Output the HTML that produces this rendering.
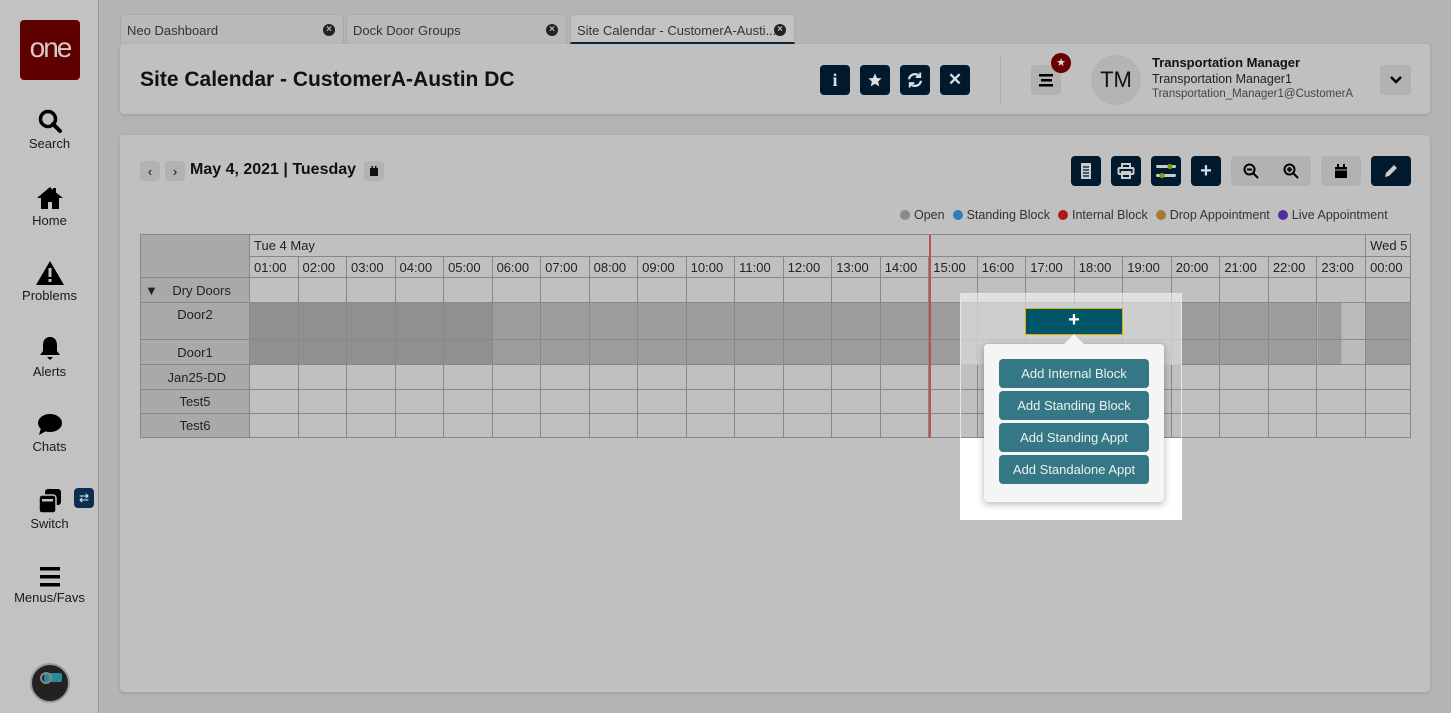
<!DOCTYPE html>
<html><head><meta charset="utf-8">
<style>
*{box-sizing:border-box;margin:0;padding:0}
body{width:1451px;height:713px;overflow:hidden;background:#b4b4b4;font-family:"Liberation Sans","Open Sans",sans-serif;color:#111;position:relative}
.abs{position:absolute}
#side{left:0;top:0;width:99px;height:713px;background:#c2c2c2;border-right:1px solid #9a9a9a}
.nav{position:absolute;left:0;width:99px;text-align:center;font-size:13px;color:#1a1a1a}
.nav svg{display:block;margin:0 auto 2px}
.tab{position:absolute;top:14px;height:30px;background:#b9b9b9;border-radius:5px 5px 0 0;font-size:13px;color:#333;padding:8px 6px;border:1px solid #aaa;border-bottom:none}
.tab .x{position:absolute;right:8px;top:9px;width:12px;height:12px;border-radius:50%;background:#222;color:#bbb;font-size:10px;line-height:12px;text-align:center;font-weight:bold}
.card{background:#c0c0c0;border-radius:4px;box-shadow:0 1px 3px rgba(0,0,0,.15)}
.db{position:absolute;width:30px;height:30px;background:#021a2d;border-radius:4px;display:flex;align-items:center;justify-content:center}
.lb{position:absolute;background:#b2b2b2;border-radius:4px;display:flex;align-items:center;justify-content:center}
table{position:absolute;left:140px;top:234px;border-collapse:collapse;table-layout:fixed;width:1271px;font-size:13px;color:#222}
td{border:1px solid #888;padding:0 4px;white-space:nowrap;overflow:hidden}
td.l{background:#a9a9a9;text-align:center}
.d1{background:#909090}.d2{background:#9c9c9c}
.mb{position:absolute;left:999px;width:150px;height:29px;background:#347785;border-radius:4px;color:#f0f0f0;font-size:13px;text-align:center;line-height:29px}
.leg{font-size:12.5px;color:#333}
.leg i{display:inline-block;width:10px;height:10px;border-radius:50%;margin:0 4px 0 8px;vertical-align:-1px}
</style></head><body>

<div id="side" class="abs">
  <div class="abs" style="left:20px;top:20px;width:60px;height:60px;background:#5e0000;border-radius:4px;color:#d8c8c8;font-size:28px;text-align:center;line-height:56px;letter-spacing:-2px">one</div>
  <div class="nav" style="top:108px"><svg width="26" height="26" viewBox="0 0 26 26"><circle cx="11" cy="11" r="7.5" fill="none" stroke="#000" stroke-width="3.5"/><path d="M16 16l7 7" stroke="#000" stroke-width="4" stroke-linecap="round"/></svg>Search</div>
  <div class="nav" style="top:185px"><svg width="28" height="26" viewBox="0 0 28 26"><path d="M14 2L1 13h4v11h7v-7h4v7h7V13h4L20 7.5V3h-3v2z" fill="#000"/></svg>Home</div>
  <div class="nav" style="top:260px"><svg width="30" height="26" viewBox="0 0 30 26"><path d="M15 1L1 25h28z" fill="#000"/><rect x="13.5" y="8" width="3" height="9" fill="#c2c2c2"/><rect x="13.5" y="19" width="3" height="3" fill="#c2c2c2"/></svg>Problems</div>
  <div class="nav" style="top:336px"><svg width="24" height="26" viewBox="0 0 24 26"><path d="M12 1c-5 0-7 4-7 8v6l-3 4h20l-3-4V9c0-4-2-8-7-8z" fill="#000"/><path d="M9 21h6l-3 3z" fill="#000"/></svg>Alerts</div>
  <div class="nav" style="top:413px"><svg width="26" height="24" viewBox="0 0 26 24"><ellipse cx="13" cy="10" rx="12" ry="9" fill="#000"/><path d="M4 15l-2 7 7-4z" fill="#000"/></svg>Chats</div>
  <div class="nav" style="top:488px"><svg width="26" height="26" viewBox="0 0 26 26"><rect x="8" y="1" width="16" height="16" rx="3" fill="#000"/><rect x="2" y="7" width="17" height="18" rx="3" fill="#000" stroke="#c2c2c2" stroke-width="1.5"/><rect x="5" y="11" width="11" height="2.5" fill="#c2c2c2"/></svg>Switch</div>
  <div class="abs" style="left:74px;top:488px;width:20px;height:20px;background:#0b2d50;border-radius:4px;color:#cfe;font-size:12px;text-align:center;line-height:20px">⇄</div>
  <div class="nav" style="top:566px"><svg width="24" height="22" viewBox="0 0 24 22"><rect x="2" y="1" width="20" height="3.5" fill="#000"/><rect x="2" y="9" width="20" height="3.5" fill="#000"/><rect x="2" y="17" width="20" height="3.5" fill="#000"/></svg>Menus/Favs</div>
  <div class="abs" style="left:30px;top:663px;width:40px;height:40px;border-radius:50%;background:#222;border:2px solid #999"><div class="abs" style="left:12px;top:8px;width:18px;height:9px;background:#2a8a9c;border-radius:2px"></div><div class="abs" style="left:8px;top:7px;width:12px;height:12px;border-radius:50%;border:2px solid #888"></div></div>
</div>

<div class="tab" style="left:120px;width:224px">Neo Dashboard<span class="x">×</span></div>
<div class="tab" style="left:346px;width:221px">Dock Door Groups<span class="x">×</span></div>
<div class="tab" style="left:570px;width:225px;background:#c3c3c3;border-bottom:2px solid #0a2438">Site Calendar - CustomerA-Austi...<span class="x">×</span></div>

<div class="card abs" style="left:120px;top:44px;width:1310px;height:70px"></div>
<div class="abs" style="left:140px;top:68px;font-size:21px;font-weight:bold;color:#111">Site Calendar - CustomerA-Austin DC</div>
<div class="db" style="left:820px;top:65px;color:#ddd;font-weight:bold;font-family:'Liberation Serif',serif;font-size:18px">i</div>
<div class="db" style="left:860px;top:65px"><svg width="16" height="16" viewBox="0 0 24 24"><path d="M12 2l3 7 7 .6-5.3 4.7 1.7 7.2L12 17.8 5.6 21.5l1.7-7.2L2 9.6 9 9z" fill="#ddd"/></svg></div>
<div class="db" style="left:900px;top:65px"><svg width="18" height="18" viewBox="0 0 24 24" fill="none" stroke="#ddd" stroke-width="3"><path d="M4 11a8 8 0 0 1 14-4M20 13a8 8 0 0 1-14 4"/><path d="M19 2v6h-6M5 22v-6h6" stroke-width="2.5"/></svg></div>
<div class="db" style="left:940px;top:65px;color:#ddd;font-weight:bold;font-size:17px">✕</div>
<div class="abs" style="left:1000px;top:55px;width:1px;height:50px;background:#aaa"></div>
<div class="lb" style="left:1031px;top:65px;width:30px;height:30px"><svg width="16" height="14" viewBox="0 0 16 14"><rect x="1" y="1" width="14" height="2.5" fill="#000"/><rect x="3" y="6" width="11" height="2.5" fill="#000"/><rect x="1" y="11" width="14" height="2.5" fill="#000"/></svg></div>
<div class="abs" style="left:1051px;top:53px;width:20px;height:20px;border-radius:50%;background:#6a0000;color:#ddd;font-size:11px;text-align:center;line-height:20px">★</div>
<div class="abs" style="left:1091px;top:55px;width:50px;height:50px;border-radius:50%;background:#b4b4b4;font-size:22px;text-align:center;line-height:50px;color:#111">TM</div>
<div class="abs" style="left:1152px;top:55px;font-size:13px;font-weight:bold">Transportation Manager</div>
<div class="abs" style="left:1152px;top:72px;font-size:12.5px;color:#222">Transportation Manager1</div>
<div class="abs" style="left:1152px;top:88px;font-size:11.5px;color:#444">Transportation_Manager1@CustomerA</div>
<div class="lb" style="left:1380px;top:65px;width:31px;height:30px"><svg width="14" height="10" viewBox="0 0 14 10"><path d="M2 2l5 5 5-5" fill="none" stroke="#000" stroke-width="2.5"/></svg></div>

<div class="card abs" style="left:120px;top:135px;width:1310px;height:557px"></div>
<div class="lb" style="left:140px;top:161px;width:20px;height:20px;font-size:13px">‹</div>
<div class="lb" style="left:165px;top:161px;width:20px;height:20px;font-size:13px">›</div>
<div class="abs" style="left:190px;top:161px;font-size:16px;font-weight:bold">May 4, 2021 | Tuesday</div>
<div class="lb" style="left:364px;top:161px;width:20px;height:20px"><svg width="10" height="10" viewBox="0 0 10 10"><rect x="1" y="2" width="8" height="8" fill="#111"/><rect x="2.5" y="0" width="1.5" height="3" fill="#111"/><rect x="6" y="0" width="1.5" height="3" fill="#111"/></svg></div>

<div class="db" style="left:1071px;top:156px"><svg width="12" height="18" viewBox="0 0 12 18"><rect x="1" y="1" width="10" height="16" fill="#ccc"/><path d="M3 5h6M3 8h6M3 11h6M3 14h6" stroke="#021a2d" stroke-width="1.2"/></svg></div>
<div class="db" style="left:1111px;top:156px"><svg width="18" height="16" viewBox="0 0 18 16" fill="none" stroke="#ccc" stroke-width="2"><rect x="5" y="1" width="8" height="4"/><rect x="1.5" y="5" width="15" height="6" rx="1"/><rect x="5" y="9" width="8" height="6"/></svg></div>
<div class="db" style="left:1151px;top:156px"><svg width="22" height="18" viewBox="0 0 22 18"><rect x="1" y="3" width="20" height="3" rx="1.5" fill="#ccc"/><rect x="1" y="12" width="20" height="3" rx="1.5" fill="#ccc"/><circle cx="15" cy="4.5" r="2.6" fill="#7a9a10"/><circle cx="7" cy="13.5" r="2.6" fill="#7a9a10"/></svg></div>
<div class="db" style="left:1191px;top:156px;color:#ddd;font-size:20px;font-weight:bold">+</div>
<div class="lb" style="left:1231px;top:156px;width:80px;height:30px;justify-content:space-around"><svg width="16" height="16" viewBox="0 0 16 16" fill="none" stroke="#000" stroke-width="2"><circle cx="6.5" cy="6.5" r="5"/><path d="M10 10l5 5M4 6.5h5"/></svg><svg width="16" height="16" viewBox="0 0 16 16" fill="none" stroke="#000" stroke-width="2"><circle cx="6.5" cy="6.5" r="5"/><path d="M10 10l5 5M4 6.5h5M6.5 4v5"/></svg></div>
<div class="lb" style="left:1321px;top:156px;width:40px;height:30px"><svg width="14" height="15" viewBox="0 0 14 15"><rect x="1" y="3" width="12" height="11" fill="#000"/><rect x="3" y="0" width="2" height="4" fill="#000"/><rect x="9" y="0" width="2" height="4" fill="#000"/><rect x="1" y="5.5" width="12" height="1" fill="#b2b2b2"/></svg></div>
<div class="db" style="left:1371px;top:156px;width:40px"><svg width="16" height="16" viewBox="0 0 16 16"><path d="M2 14l1-4 8-8 3 3-8 8z" fill="#ccc"/></svg></div>

<div class="abs leg" style="left:892px;top:208px"><i style="background:#8a8a8a"></i>Open<i style="background:#2a7fb8"></i>Standing Block<i style="background:#b01818"></i>Internal Block<i style="background:#a87a30"></i>Drop Appointment<i style="background:#5030a0"></i>Live Appointment</div>

<table>
<colgroup><col style="width:109px"><col span="23" style="width:48.52px"><col style="width:45px"></colgroup>
<tr style="height:22px"><td class="l" style="border-bottom:none"></td><td colspan="23" style="border-bottom:none">Tue 4 May</td><td style="border-bottom:none">Wed 5</td></tr>
<tr style="height:21px"><td class="l" style="border-top:none"></td><td>01:00</td><td>02:00</td><td>03:00</td><td>04:00</td><td>05:00</td><td>06:00</td><td>07:00</td><td>08:00</td><td>09:00</td><td>10:00</td><td>11:00</td><td>12:00</td><td>13:00</td><td>14:00</td><td>15:00</td><td>16:00</td><td>17:00</td><td>18:00</td><td>19:00</td><td>20:00</td><td>21:00</td><td>22:00</td><td>23:00</td><td>00:00</td></tr>
<tr style="height:25px"><td class="l" style="text-align:left">▼ &nbsp;&nbsp;&nbsp;Dry Doors</td><td></td><td></td><td></td><td></td><td></td><td></td><td></td><td></td><td></td><td></td><td></td><td></td><td></td><td></td><td></td><td></td><td></td><td></td><td></td><td></td><td></td><td></td><td></td><td></td></tr>
<tr style="height:37px"><td class="l" style="vertical-align:top;padding-top:4px">Door2</td><td class="d1"></td><td class="d1"></td><td class="d1"></td><td class="d1"></td><td class="d1"></td><td class="d2"></td><td class="d2"></td><td class="d2"></td><td class="d2"></td><td class="d2"></td><td class="d2"></td><td class="d2"></td><td class="d2"></td><td class="d2"></td><td class="d2"></td><td class="d2"></td><td class="d2"></td><td class="d2"></td><td class="d2"></td><td class="d2"></td><td class="d2"></td><td class="d2"></td><td style="background:linear-gradient(90deg,#9c9c9c 50%,#bcbcbc 50%)"></td><td class="d2"></td></tr>
<tr style="height:25px"><td class="l">Door1</td><td class="d1"></td><td class="d1"></td><td class="d1"></td><td class="d1"></td><td class="d1"></td><td class="d2"></td><td class="d2"></td><td class="d2"></td><td class="d2"></td><td class="d2"></td><td class="d2"></td><td class="d2"></td><td class="d2"></td><td class="d2"></td><td class="d2"></td><td class="d2"></td><td class="d2"></td><td class="d2"></td><td class="d2"></td><td class="d2"></td><td class="d2"></td><td class="d2"></td><td style="background:linear-gradient(90deg,#9c9c9c 50%,#bcbcbc 50%)"></td><td class="d2"></td></tr>
<tr style="height:25px"><td class="l">&nbsp;Jan25-DD</td><td></td><td></td><td></td><td></td><td></td><td></td><td></td><td></td><td></td><td></td><td></td><td></td><td></td><td></td><td></td><td></td><td></td><td></td><td></td><td></td><td></td><td></td><td></td><td></td></tr>
<tr style="height:24px"><td class="l">Test5</td><td></td><td></td><td></td><td></td><td></td><td></td><td></td><td></td><td></td><td></td><td></td><td></td><td></td><td></td><td></td><td></td><td></td><td></td><td></td><td></td><td></td><td></td><td></td><td></td></tr>
<tr style="height:24px"><td class="l">Test6</td><td></td><td></td><td></td><td></td><td></td><td></td><td></td><td></td><td></td><td></td><td></td><td></td><td></td><td></td><td></td><td></td><td></td><td></td><td></td><td></td><td></td><td></td><td></td><td></td></tr>
</table>
<div class="abs" style="left:929px;top:235px;width:2px;height:203px;background:#c0504a"></div>

<div class="abs" style="left:960px;top:293px;width:222px;height:72px;background:rgba(255,255,255,.5);border:1px solid #e6e6e6;border-bottom:none"></div>
<div class="abs" style="left:960px;top:365px;width:1px;height:73px;background:#e6e6e6"></div>
<div class="abs" style="left:1181px;top:365px;width:1px;height:73px;background:#e6e6e6"></div>
<div class="abs" style="left:960px;top:438px;width:222px;height:82px;background:#fff"></div>
<div class="abs" style="left:1025px;top:308px;width:98px;height:27px;background:#005566;border:1.5px solid #e0b000;color:#fff;font-size:20px;font-weight:bold;text-align:center;line-height:22px">+</div>
<div class="abs" style="left:984px;top:344px;width:180px;height:158px;background:#f5f5f5;border-radius:4px;box-shadow:0 2px 8px rgba(0,0,0,.3)"></div>
<div class="abs" style="left:1067px;top:337px;width:14px;height:14px;background:#f5f5f5;transform:rotate(45deg)"></div>
<div class="mb" style="top:359px">Add Internal Block</div>
<div class="mb" style="top:391px">Add Standing Block</div>
<div class="mb" style="top:423px">Add Standing Appt</div>
<div class="mb" style="top:455px">Add Standalone Appt</div>
</body></html>
